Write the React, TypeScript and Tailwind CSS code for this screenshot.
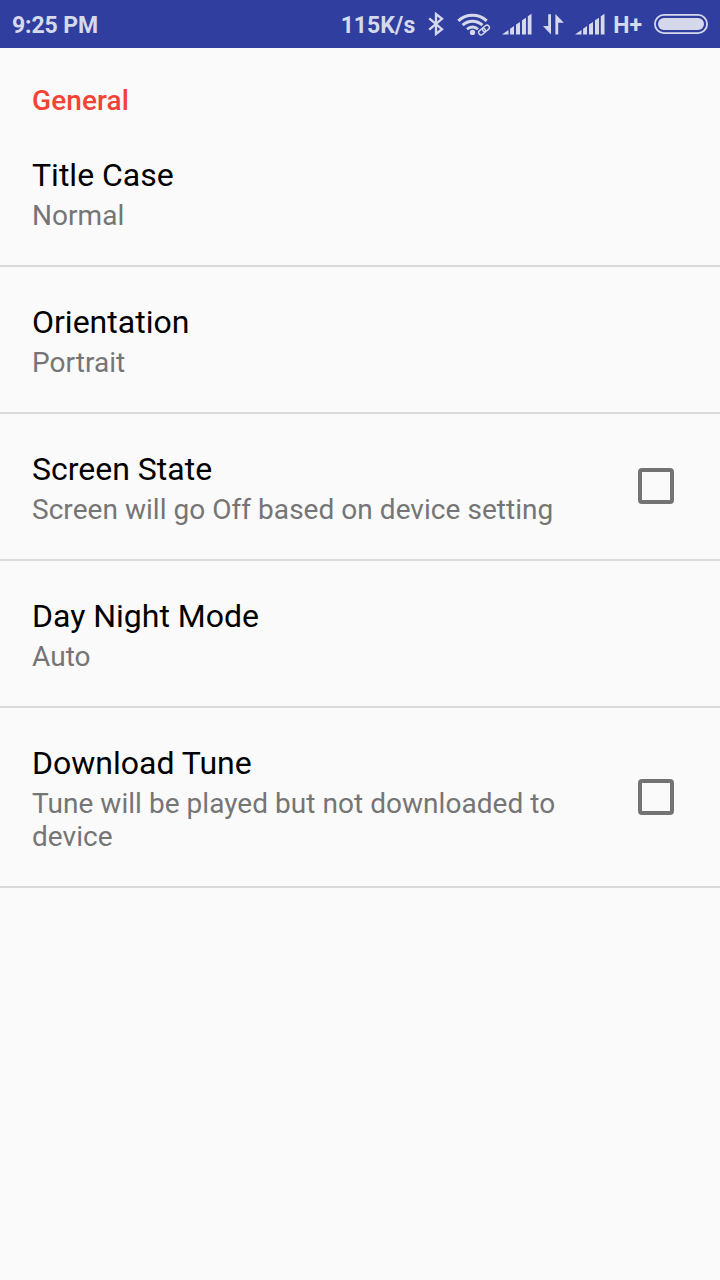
import { clsx } from 'clsx';

type Preference = {
  title: string;
  summary: string;
  checkbox?: boolean;
};

const preferences: Preference[] = [
  { title: 'Title Case', summary: 'Normal' },
  { title: 'Orientation', summary: 'Portrait' },
  { title: 'Screen State', summary: 'Screen will go Off based on device setting', checkbox: true },
  { title: 'Day Night Mode', summary: 'Auto' },
  { title: 'Download Tune', summary: 'Tune will be played but not downloaded to device', checkbox: true },
];

const BluetoothIcon = () => (
  <svg className="ml-[13px] h-6 w-4" viewBox="0 0 16 24" fill="none" stroke="currentColor" strokeWidth="2.3">
    <path d="M1.2 6.3 14 17.2 8 22V2l6 4.8L1.2 17.7" />
  </svg>
);

const WifiIcon = () => (
  <svg className="ml-[13px] h-6 w-[34px]" viewBox="0 0 34 24" fill="none" stroke="currentColor">
    <path d="M1.3 8.8a21 21 0 0 1 28.4 0" strokeWidth="3" />
    <path d="M5.6 13.2a14.5 14.5 0 0 1 19.8 0" strokeWidth="3" />
    <path d="M10 17.2a8 8 0 0 1 11 0" strokeWidth="2.8" />
    <circle cx="15.5" cy="20.4" r="2.6" fill="currentColor" stroke="none" />
    <g transform="rotate(-40 27 18)" strokeWidth="1.4">
      <rect x="20.8" y="15.6" width="7.4" height="4.8" rx="2.4" />
      <rect x="25.8" y="15.6" width="7.4" height="4.8" rx="2.4" />
    </g>
  </svg>
);

const SignalIcon = ({ className }: { className?: string }) => (
  <svg className={clsx('h-6 w-[30px]', className)} viewBox="0 0 30 24" fill="currentColor">
    <path d="M0 22.5 6.5 18v4.5zM8.1 16.7l3.9-2.6v8.4H8.1zM14 12.6l4-2.7v12.6h-4zM20 8.3 24 5.7v16.8h-4zM25.8 4.3l3.7-2.5v20.7h-3.7z" />
  </svg>
);

const DataIcon = () => (
  <svg className="ml-[11px] h-6 w-[21px]" viewBox="0 0 21 24" fill="currentColor">
    <path d="M5.2 2.3H8v20.2L0 14h5.2zM12.4 22.5V2l8.4 8.7h-5.6v11.8z" />
  </svg>
);

const BatteryIcon = () => (
  <svg className="ml-[12px] h-6 w-[54px]" viewBox="0 0 54 24">
    <rect x="0.9" y="2.9" width="52.2" height="18.2" rx="9.1" fill="none" stroke="currentColor" strokeWidth="1.8" />
    <rect x="4" y="6" width="46" height="12" rx="6" fill="currentColor" />
  </svg>
);

const StatusBar = () => (
  <header className="flex h-12 items-center bg-[#303f9f] pl-3 pr-3 text-[23px] font-bold leading-[27px] text-[#d6d9ec]">
    <span className="mt-[3px] tracking-[-0.1px]">9:25 PM</span>
    <div className="ml-auto flex items-center">
      <span className="mt-[3px]">115K/s</span>
      <BluetoothIcon />
      <WifiIcon />
      <SignalIcon className="ml-[11px]" />
      <DataIcon />
      <SignalIcon className="ml-[11px]" />
      <span className="ml-[8px] mt-[3px]">H+</span>
      <BatteryIcon />
      {/* pill sits flush with the bar padding */}
    </div>
  </header>
);

const PreferenceRow = ({ title, summary, checkbox }: Preference) => (
  <li className="flex items-center border-b-2 border-[#dadada] pl-8 pr-[46px]">
    <div className="w-[542px] pt-9 pb-[33px]">
      <h2 className="text-[32px] leading-[38px] text-black">{title}</h2>
      <p className="mt-[5px] text-[28px] leading-[33px] tracking-[0.04px] text-[#757575]">{summary}</p>
    </div>
    {checkbox && <span className="mb-px ml-auto size-9 rounded-[4px] border-4 border-[#737373]" />}
  </li>
);

export default function App() {
  return (
    <div className="min-h-screen bg-[#fafafa] font-['Roboto',sans-serif]">
      <StatusBar />
      <main>
        <h1 className="h-[72px] pl-8 pt-9 text-[28px] font-medium leading-[33px] tracking-[0.1px] text-[#f44336]">General</h1>
        <ul>
          {preferences.map((pref) => (
            <PreferenceRow key={pref.title} {...pref} />
          ))}
        </ul>
      </main>
    </div>
  );
}
